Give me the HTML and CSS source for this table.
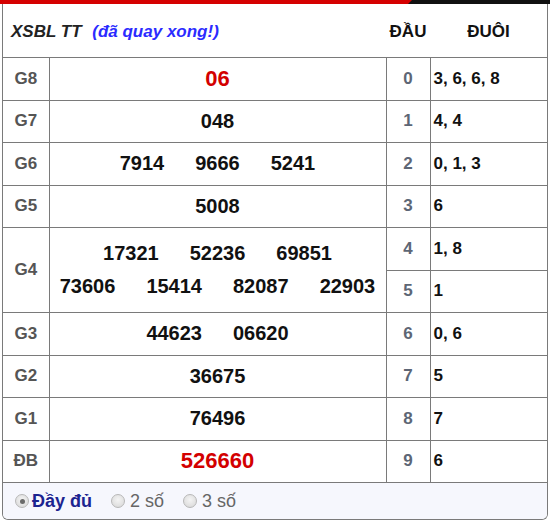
FILE: index.html
```html
<!DOCTYPE html>
<html lang="vi">
<head>
<meta charset="utf-8">
<link rel="stylesheet" href="styles.css">
</head>
<body>
<div class="topbar"><div class="topbar-red"></div></div>
<div class="box">
  <table class="kq">
    <colgroup>
      <col class="c-label"><col class="c-prize"><col class="c-dau"><col class="c-duoi">
    </colgroup>
    <thead>
      <tr class="head">
        <th colspan="2" class="title"><span class="name">XSBL TT</span> <span class="status">(đã quay xong!)</span></th>
        <th class="h-dau">ĐẦU</th>
        <th class="h-duoi">ĐUÔI</th>
      </tr>
    </thead>
    <tbody>
      <tr><td class="lbl">G8</td><td class="prize red"><div class="nums"><span>06</span></div></td><td class="dau">0</td><td class="duoi">3, 6, 6, 8</td></tr>
      <tr><td class="lbl">G7</td><td class="prize"><div class="nums"><span>048</span></div></td><td class="dau">1</td><td class="duoi">4, 4</td></tr>
      <tr><td class="lbl">G6</td><td class="prize"><div class="nums"><span>7914</span><span>9666</span><span>5241</span></div></td><td class="dau">2</td><td class="duoi">0, 1, 3</td></tr>
      <tr><td class="lbl">G5</td><td class="prize"><div class="nums"><span>5008</span></div></td><td class="dau">3</td><td class="duoi">6</td></tr>
      <tr><td class="lbl" rowspan="2">G4</td><td class="prize" rowspan="2"><div class="nums"><span>17321</span><span>52236</span><span>69851</span></div><div class="nums"><span>73606</span><span>15414</span><span>82087</span><span>22903</span></div></td><td class="dau">4</td><td class="duoi">1, 8</td></tr>
      <tr><td class="dau">5</td><td class="duoi">1</td></tr>
      <tr><td class="lbl">G3</td><td class="prize"><div class="nums"><span>44623</span><span>06620</span></div></td><td class="dau">6</td><td class="duoi">0, 6</td></tr>
      <tr><td class="lbl">G2</td><td class="prize"><div class="nums"><span>36675</span></div></td><td class="dau">7</td><td class="duoi">5</td></tr>
      <tr><td class="lbl">G1</td><td class="prize"><div class="nums"><span>76496</span></div></td><td class="dau">8</td><td class="duoi">7</td></tr>
      <tr><td class="lbl">ĐB</td><td class="prize red"><div class="nums"><span>526660</span></div></td><td class="dau">9</td><td class="duoi">6</td></tr>
    </tbody>
  </table>
  <div class="footer">
    <label class="opt on"><span class="radio"></span><span class="opt-text">Đầy đủ</span></label>
    <label class="opt"><span class="radio"></span><span class="opt-text">2 số</span></label>
    <label class="opt"><span class="radio"></span><span class="opt-text">3 số</span></label>
  </div>
</div>
</body>
</html>
```
FILE: styles.css
```css
html, body {
  margin: 0;
  padding: 0;
  background: #fff;
}
body {
  font-family: "Liberation Sans", Arial, sans-serif;
  width: 550px;
  height: 523px;
  overflow: hidden;
}
.topbar {
  height: 4px;
  background: #111;
  width: 550px;
}
.topbar-red {
  width: 412px;
  height: 4px;
  background: #d50000;
  clip-path: polygon(0 0, 100% 0, calc(100% - 4px) 100%, 0 100%);
}
.box {
  margin: 0 2px;
  width: 544px;
  border: 1.5px solid #7a7a7a;
  border-top: none;
  border-radius: 0 0 6px 6px;
  overflow: hidden;
}
.kq {
  width: 100%;
  border-collapse: collapse;
  table-layout: fixed;
}
.c-label { width: 46px; }
.c-prize { width: 337px; }
.c-dau { width: 44px; }
.c-duoi { width: auto; }
.kq td {
  border: 1px solid #7a7a7a;
  padding: 0;
}
.kq th {
  border: none;
  border-bottom: 1px solid #7a7a7a;
  padding: 0;
}
.kq tr > :first-child { border-left: none; }
.kq tr > :last-child { border-right: none; }
.head th {
  height: 51px;
  font-weight: bold;
  font-size: 17px;
  color: #111;
  padding-top: 2px;
}
.title {
  text-align: left;
  padding-left: 8px !important;
  font-style: italic;
  font-size: 16.5px;
}
.name { color: #222; }
.status { color: #2b2bff; margin-left: 6px; }
.h-dau, .h-duoi { text-align: center; }
.kq tbody td {
  height: 41.5px;
}
.lbl {
  text-align: center;
  font-weight: bold;
  font-size: 17px;
  color: #555;
}
.prize {
  text-align: center;
  font-weight: bold;
  font-size: 20px;
  color: #111;
}
.nums {
  display: flex;
  justify-content: center;
  gap: 31px;
}
.prize .nums + .nums { margin-top: 10px; }
.prize.red { color: #d30000; font-size: 22px; }
.dau {
  text-align: center;
  font-weight: bold;
  font-size: 17px;
  color: #5d6675;
}
.duoi {
  text-align: left;
  padding-left: 3px !important;
  font-weight: bold;
  font-size: 17px;
  color: #111;
}
.footer {
  display: flex;
  align-items: center;
  height: 36px;
  background: #f6f7fd;
  padding-left: 12px;
  gap: 19px;
  font-size: 18px;
}
.opt {
  display: flex;
  align-items: center;
  gap: 5px;
  color: #666;
}
.opt.on .opt-text {
  color: #1c2490;
  font-weight: bold;
}
.opt.on { gap: 3px; }
.radio {
  width: 12px;
  height: 12px;
  border-radius: 50%;
  border: 1px solid #b8b8b8;
  background: radial-gradient(circle at 50% 40%, #f4f4f4, #d6d6d6);
  position: relative;
}
.opt.on .radio::after {
  content: "";
  position: absolute;
  left: 3.5px;
  top: 3.5px;
  width: 5px;
  height: 5px;
  border-radius: 50%;
  background: #6a6a6a;
}
```
